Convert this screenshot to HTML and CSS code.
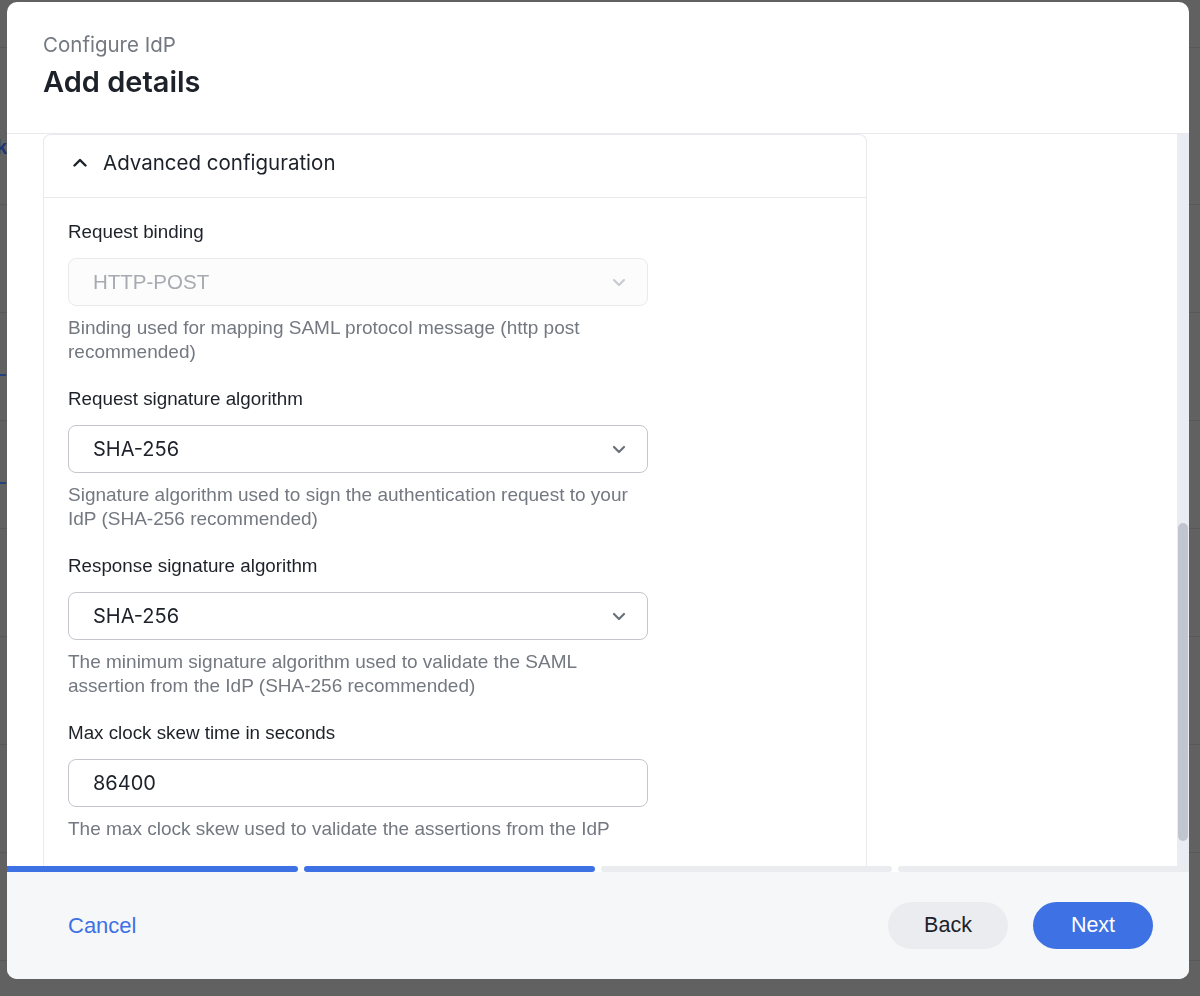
FILE: index.html
```html
<!DOCTYPE html>
<html lang="en">
<head>
<meta charset="utf-8">
<title>Configure IdP - Add details</title>
<link rel="stylesheet" href="styles.css">
</head>
<body>
<div class="backdrop">
  <div class="bg-row r1"></div><div class="bg-row r2"></div><div class="bg-row"></div><div class="bg-row"></div>
  <div class="bg-row"></div><div class="bg-row"></div><div class="bg-row"></div><div class="bg-row"></div>
  <div class="bg-row"></div><div class="bg-row"></div>
  <span class="bg-frag frag-k">k</span>
  <span class="bg-frag frag-l">l</span>
  <span class="bg-dash dash-1"></span>
  <span class="bg-dash dash-2"></span>
</div>

<div class="modal">
  <header class="modal-header">
    <div class="eyebrow">Configure IdP</div>
    <h1 class="title">Add details</h1>
  </header>

  <div class="modal-body">
    <div class="scroll-content">
      <section class="card">
        <div class="card-head">
          <svg class="chev-up" width="14" height="9" viewBox="0 0 14 9"><path d="M1.5 7.5 L7 2 L12.5 7.5" fill="none" stroke="#1d2129" stroke-width="2.4" stroke-linecap="round" stroke-linejoin="round"/></svg>
          <span class="card-title">Advanced configuration</span>
        </div>
        <div class="card-body">
          <div class="field">
            <div class="label">Request binding</div>
            <div class="select disabled">
              <span class="value">HTTP-POST</span>
              <svg class="chev" width="14" height="9" viewBox="0 0 14 9"><path d="M2 2 L7 7 L12 2" fill="none" stroke="#c6c9cf" stroke-width="2" stroke-linecap="round" stroke-linejoin="round"/></svg>
            </div>
            <div class="help">Binding used for mapping SAML protocol message (http post recommended)</div>
          </div>
          <div class="field">
            <div class="label">Request signature algorithm</div>
            <div class="select">
              <span class="value">SHA-256</span>
              <svg class="chev" width="14" height="9" viewBox="0 0 14 9"><path d="M2 2 L7 7 L12 2" fill="none" stroke="#6b7079" stroke-width="2.2" stroke-linecap="round" stroke-linejoin="round"/></svg>
            </div>
            <div class="help">Signature algorithm used to sign the authentication request to your IdP (SHA-256 recommended)</div>
          </div>
          <div class="field">
            <div class="label">Response signature algorithm</div>
            <div class="select">
              <span class="value">SHA-256</span>
              <svg class="chev" width="14" height="9" viewBox="0 0 14 9"><path d="M2 2 L7 7 L12 2" fill="none" stroke="#6b7079" stroke-width="2.2" stroke-linecap="round" stroke-linejoin="round"/></svg>
            </div>
            <div class="help">The minimum signature algorithm used to validate the SAML assertion from the IdP (SHA-256 recommended)</div>
          </div>
          <div class="field">
            <div class="label">Max clock skew time in seconds</div>
            <div class="select input">
              <span class="value">86400</span>
            </div>
            <div class="help">The max clock skew used to validate the assertions from the IdP</div>
          </div>
        </div>
      </section>
    </div>
    <div class="scrollbar"><div class="thumb"></div></div>
  </div>

  <div class="progress">
    <div class="seg done"></div>
    <div class="seg done"></div>
    <div class="seg"></div>
    <div class="seg"></div>
  </div>

  <footer class="modal-footer">
    <a class="cancel" href="#">Cancel</a>
    <div class="actions">
      <button class="btn btn-back">Back</button>
      <button class="btn btn-next">Next</button>
    </div>
  </footer>
</div>
</body>
</html>
```

FILE: styles.css
```css
* { box-sizing: border-box; }
html, body { margin: 0; padding: 0; }
body {
  width: 1200px;
  height: 996px;
  overflow: hidden;
  background: #616161;
  font-family: "Liberation Sans", Arial, sans-serif;
  color: #1d2129;
}

.backdrop {
  position: relative;
  height: 996px;
  overflow: hidden;
}
.bg-row {
  height: 108px;
  border-bottom: 1px solid #585858;
}
.bg-row.r1 { height: 48px; }
.bg-row.r2 { height: 157px; }
.bg-frag {
  position: absolute;
  left: -4px;
  font-size: 20px;
  font-weight: 700;
  color: #1f3570;
}
.frag-k { top: 136px; }
.frag-l { top: 892px; left: -6px; }
.bg-dash {
  position: absolute;
  left: 0;
  width: 6px;
  height: 2px;
  background: #24407e;
}
.dash-1 { top: 374px; }
.dash-2 { top: 482px; }

.modal {
  position: fixed;
  left: 7px;
  top: 2px;
  width: 1182px;
  height: 977px;
  background: #ffffff;
  border-radius: 10px;
  overflow: hidden;
  display: flex;
  flex-direction: column;
}

.modal-header {
  flex: 0 0 132px;
  padding: 30px 36px 0;
  border-bottom: 1px solid #e9eaed;
}
.eyebrow {
  font-family: Inter, "Liberation Sans", sans-serif;
  font-size: 20.5px;
  line-height: 26px;
  color: #737881;
}
.title {
  margin: 6px 0 0;
  font-family: Inter, "Liberation Sans", sans-serif;
  font-size: 29px;
  line-height: 36px;
  font-weight: 600;
  color: #1d2129;
}

.modal-body {
  flex: 0 0 732px;
  display: flex;
  overflow: hidden;
}
.scroll-content {
  flex: 1 1 auto;
  padding-left: 36px;
  overflow: hidden;
}
.card {
  width: 824px;
  border: 1px solid #e9eaee;
  border-bottom: none;
  border-radius: 8px 8px 0 0;
}
.card-head {
  height: 63px;
  display: flex;
  align-items: center;
  gap: 16px;
  padding: 0 0 6px 29px;
  border-bottom: 1px solid #e9eaee;
}
.chev-up { flex: 0 0 auto; margin-top: -2px; }
.card-title {
  font-family: Inter, "Liberation Sans", sans-serif;
  font-size: 20.5px;
  line-height: 28px;
  color: #1d2129;
}
.card-body {
  padding: 22px 24px 120px;
}
.field + .field { margin-top: 23px; }
.label {
  font-size: 18.8px;
  line-height: 24px;
  color: #1d2129;
  margin-bottom: 14px;
}
.select {
  width: 580px;
  height: 48px;
  border: 1px solid #c3c6cc;
  border-radius: 8px;
  display: flex;
  align-items: center;
  justify-content: space-between;
  padding: 0 21px 0 24px;
  background: #fff;
}
.select .value {
  font-family: Inter, "Liberation Sans", sans-serif;
  font-size: 20px;
  color: #1d2129;
}
.select.disabled {
  border-color: #e9eaee;
  background: #fcfcfd;
}
.select.disabled .value {
  font-family: "Liberation Sans", Arial, sans-serif;
  font-size: 20.5px;
  color: #a7aab0;
}
.help {
  margin-top: 10px;
  font-size: 19px;
  line-height: 24px;
  color: #737881;
  width: 580px;
}

.scrollbar {
  flex: 0 0 12px;
  background: #ebecf1;
  padding: 389px 1px 0;
}
.thumb {
  height: 318px;
  background: #c1c5cf;
  border-radius: 6px;
}

.progress {
  flex: 0 0 6px;
  display: flex;
  gap: 6px;
  background: #ffffff;
}
.seg {
  flex: 1 1 0;
  background: #ebecf0;
  border-radius: 3px;
}
.seg:first-child { border-radius: 0 3px 3px 0; }
.seg:last-child { border-radius: 3px 0 0 3px; }
.seg.done { background: #3e71e4; }

.modal-footer {
  flex: 0 0 107px;
  background: #f6f7f9;
  display: flex;
  align-items: center;
  justify-content: space-between;
  padding: 0 36px 0 61px;
}
.cancel {
  font-size: 22px;
  color: #3e71e4;
  text-decoration: none;
}
.actions {
  display: flex;
  gap: 25px;
}
.btn {
  width: 120px;
  height: 47px;
  border: none;
  border-radius: 24px;
  font-family: "Liberation Sans", Arial, sans-serif;
  font-size: 21.5px;
  cursor: pointer;
}
.btn-back { background: #ebecf0; color: #1d2129; }
.btn-next { background: #3e71e4; color: #ffffff; }
```
